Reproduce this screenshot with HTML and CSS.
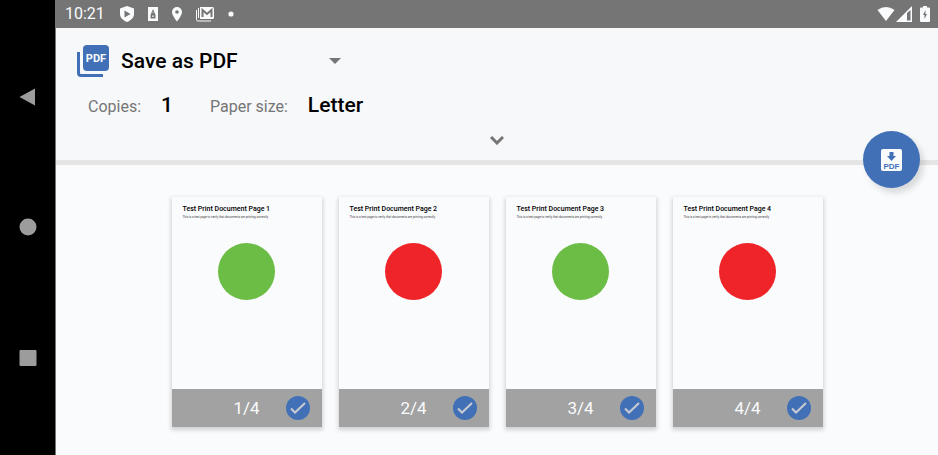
FILE: index.html
```html
<!DOCTYPE html>
<html lang="en">
<head>
<meta charset="utf-8">
<meta name="viewport" content="width=device-width, initial-scale=1">
<title>Save as PDF</title>
<link rel="stylesheet" href="styles.css">
</head>
<body>
<nav class="navbar" aria-label="System">
  <button class="nav-button" aria-label="Back"><svg width="18" height="18" viewBox="0 0 18 18"><path d="M.5 9 16 .5v17z"/></svg></button>
  <button class="nav-button" aria-label="Home"><svg width="18" height="18" viewBox="0 0 18 18"><circle cx="9" cy="9" r="8.500"/></svg></button>
  <button class="nav-button" aria-label="Recent apps"><svg width="18" height="18" viewBox="0 0 18 18"><rect x="0.500" y="1" width="17" height="16" rx="1"/></svg></button>
</nav>
<div class="screen">
  <div class="status">
    <span class="clock">10:21</span>
    <svg width="16" height="18" viewBox="0 0 16 18"><path fill-rule="evenodd" d="M8 1 15 3.500V9c0 4-3.500 6.500-7 8-3.500-1.500-7-4-7-8V3.500zM5.500 5.500v7l6-3.500z"/></svg>
    <svg width="12" height="14" viewBox="0 0 12 14"><path fill-rule="evenodd" d="M1 0h10v14H1zM6 2 3.500 8v3.500h5V8zM5.300 8.500h1.400V10H5.300zM5.500 6 6 4.500 6.500 6z"/></svg>
    <svg width="12" height="16" viewBox="0 0 12 16"><path fill-rule="evenodd" d="M6 1a5 5 0 0 0-5 5c0 3.500 5 9.500 5 9.500S11 9.500 11 6a5 5 0 0 0-5-5zm0 3.200a1.800 1.800 0 1 1 0 3.600 1.800 1.800 0 0 1 0-3.600z"/></svg>
    <svg width="20" height="16" viewBox="0 0 20 16"><path d="M5 1h12.500Q19 1 19 2.500v9q0 1.500-1.500 1.500H5z"/><path class="stroke-gray" d="M7.500 11V4L12 8l4.500-4v7"/><path class="stroke-white" d="M1.500 4v9.500q0 1.500 1.500 1.500h13M3.500 2v10"/></svg>
    <svg width="8" height="8" viewBox="0 0 8 8"><circle cx="4" cy="4" r="2.600"/></svg>
    <div class="signals">
      <svg width="18" height="16" viewBox="0 0 18 16"><path d="M.5 4Q4.500 1 9 1t8.500 3L9 15z"/></svg>
      <svg width="16" height="16" viewBox="0 0 16 16"><path fill-rule="evenodd" d="M0 16 16 0v16zM11 7v7.500h3.500V4z"/></svg>
      <svg class="battery" width="12" height="16" viewBox="0 0 12 16"><path fill-rule="evenodd" d="M4 0h4v1.500h2q1 0 1 1V15q0 1-1 1H2q-1 0-1-1V2.500q0-1 1-1h2zM6.500 4 4 9h1.500v4L8 8H6.500z"/></svg>
    </div>
  </div>
  <header class="options">
    <div class="printer">
      <svg width="32" height="32" viewBox="0 0 32 32"><rect class="blue" x="6" width="26" height="26" rx="4"/><path class="stroke-blue" d="M1.500 7v21q0 2.500 2.500 2.500h22"/><text class="icon-text" x="19" y="17" text-anchor="middle">PDF</text></svg>
      <select class="printer-select" aria-label="Printer"><option>Save as PDF</option></select>
      <svg class="caret" width="12" height="6" viewBox="0 0 12 6"><path d="M0 0h12L6 6z"/></svg>
    </div>
    <dl class="summary">
      <dt>Copies:</dt><dd>1</dd>
      <dt>Paper size:</dt><dd>Letter</dd>
    </dl>
    <button class="expand" aria-label="Expand options"><svg width="14" height="9" viewBox="0 0 14 9"><path d="m1 1 6 6 6-6"/></svg></button>
    <button class="save" aria-label="Save to PDF"><svg width="22" height="22" viewBox="0 0 22 22"><rect class="white" width="21" height="22" rx="2"/><path class="blue" d="M8.500 3h4v4H15l-4.500 5L6 7h2.500z"/><text class="save-text" x="10.500" y="20" text-anchor="middle">PDF</text></svg></button>
  </header>
  <main class="pages">
    <article class="page">
      <div class="sheet"><h2>Test Print Document Page 1</h2><p>This is a test page to verify that documents are printing correctly</p><div class="dot green"></div></div>
      <label class="bar"><span class="count">1/4</span><input type="checkbox" checked><span class="tick"><svg width="16" height="14" viewBox="0 0 16 14"><path d="m1 7.500 4 4L15 2"/></svg></span></label>
    </article>
    <article class="page">
      <div class="sheet"><h2>Test Print Document Page 2</h2><p>This is a test page to verify that documents are printing correctly</p><div class="dot red"></div></div>
      <label class="bar"><span class="count">2/4</span><input type="checkbox" checked><span class="tick"><svg width="16" height="14" viewBox="0 0 16 14"><path d="m1 7.500 4 4L15 2"/></svg></span></label>
    </article>
    <article class="page">
      <div class="sheet"><h2>Test Print Document Page 3</h2><p>This is a test page to verify that documents are printing correctly</p><div class="dot green"></div></div>
      <label class="bar"><span class="count">3/4</span><input type="checkbox" checked><span class="tick"><svg width="16" height="14" viewBox="0 0 16 14"><path d="m1 7.500 4 4L15 2"/></svg></span></label>
    </article>
    <article class="page">
      <div class="sheet"><h2>Test Print Document Page 4</h2><p>This is a test page to verify that documents are printing correctly</p><div class="dot red"></div></div>
      <label class="bar"><span class="count">4/4</span><input type="checkbox" checked><span class="tick"><svg width="16" height="14" viewBox="0 0 16 14"><path d="m1 7.500 4 4L15 2"/></svg></span></label>
    </article>
  </main>
</div>
</body>
</html>
```
FILE: styles.css
```css
* { box-sizing: border-box; }
body {
  margin: 0;
  display: flex;
  min-height: 100vh;
  background: #fafbfd;
  color: #000;
  font-family: Roboto, "Liberation Sans", sans-serif;
}
svg { display: block; flex: none; }
button { border: 0; padding: 0; background: none; cursor: pointer; }

.navbar {
  flex: none;
  width: 56px;
  display: flex;
  flex-direction: column;
  justify-content: space-around;
  padding: 32px 0;
  background: #000;
  border-right: 1px solid #757575;
}
.nav-button { display: flex; justify-content: center; fill: #9c9c9c; }

.screen { flex: 1; min-width: 0; }

.status {
  display: flex;
  align-items: center;
  gap: 12px;
  height: 28px;
  padding: 0 7px 0 9px;
  background: #757575;
  color: #fafbfd;
  fill: #fafbfd;
}
.clock { margin-right: 2px; font-size: 16px; line-height: 28px; }
.signals { display: flex; align-items: center; gap: 1px; margin-left: auto; }
.battery { margin-left: 6px; }
.stroke-gray { fill: none; stroke: #757575; stroke-width: 2; }
.stroke-white { fill: none; stroke: #fafbfd; stroke-width: 1; }

.options {
  position: relative;
  background: #f7f8fa;
  border-bottom: 5px solid #e5e5e5;
  padding-top: 16px;
}
.printer { display: flex; align-items: center; gap: 12px; padding-left: 21px; height: 33px; }
.blue { fill: #4270b6; }
.white { fill: #fafbfd; }
.stroke-blue { fill: none; stroke: #4270b6; stroke-width: 3; }
.icon-text { font-size: 11px; font-weight: 700; fill: #fafbfd; }
.save-text { font-size: 8px; font-weight: 700; fill: #4270b6; }
.printer-select {
  appearance: none;
  width: 196px;
  border: 0;
  padding: 0;
  background: none;
  color: #000;
  font: 500 21px/32px Roboto, "Liberation Sans", sans-serif;
}
.caret { fill: #757575; }

.summary {
  display: flex;
  align-items: baseline;
  margin: 12px 0 0;
  padding-left: 32px;
  line-height: 32px;
}
.summary dt { font-size: 16px; color: #757575; }
.summary dd { margin: 0 37px 0 20px; font-size: 21px; font-weight: 500; }

.expand {
  display: flex;
  justify-content: center;
  width: 100%;
  height: 37px;
  padding-top: 13px;
}
.expand path { fill: none; stroke: #757575; stroke-width: 3; }

.save {
  position: absolute;
  right: 18px;
  bottom: -28px;
  display: flex;
  align-items: center;
  justify-content: center;
  width: 57px;
  height: 57px;
  border-radius: 50%;
  background: #4270b6;
  box-shadow: 4px 5px 6px #0002;
}

.pages { display: flex; justify-content: center; gap: 17px; padding: 32px 16px 24px; }
.page {
  width: 150px;
  background: #fafbfd;
  box-shadow: 0 2px 4px 1px #0000002b;
}
.sheet { height: 192px; padding: 8px 11px; }
.sheet h2 { margin: 0; font-size: 7px; line-height: 8px; font-weight: 500; white-space: nowrap; }
.sheet p { margin: 2px 0 0; font-size: 3px; line-height: 4px; white-space: nowrap; color: #444; }
.dot { width: 57px; height: 57px; margin: 24px auto 0; border-radius: 50%; }
.green { background: #6cbd45; }
.red { background: #ee2429; }

.bar {
  position: relative;
  display: flex;
  align-items: center;
  justify-content: center;
  height: 38px;
  background: #a2a2a2;
  color: #fafbfd;
  font-size: 17px;
}
.bar input { position: absolute; right: 12px; width: 24px; height: 24px; margin: 0; opacity: 0; }
.tick {
  position: absolute;
  right: 12px;
  display: none;
  align-items: center;
  justify-content: center;
  width: 24px;
  height: 24px;
  border-radius: 50%;
  background: #4270b6;
  pointer-events: none;
}
.bar input:checked + .tick { display: flex; }
.tick path { fill: none; stroke: #c8ccd2; stroke-width: 2; }
```
